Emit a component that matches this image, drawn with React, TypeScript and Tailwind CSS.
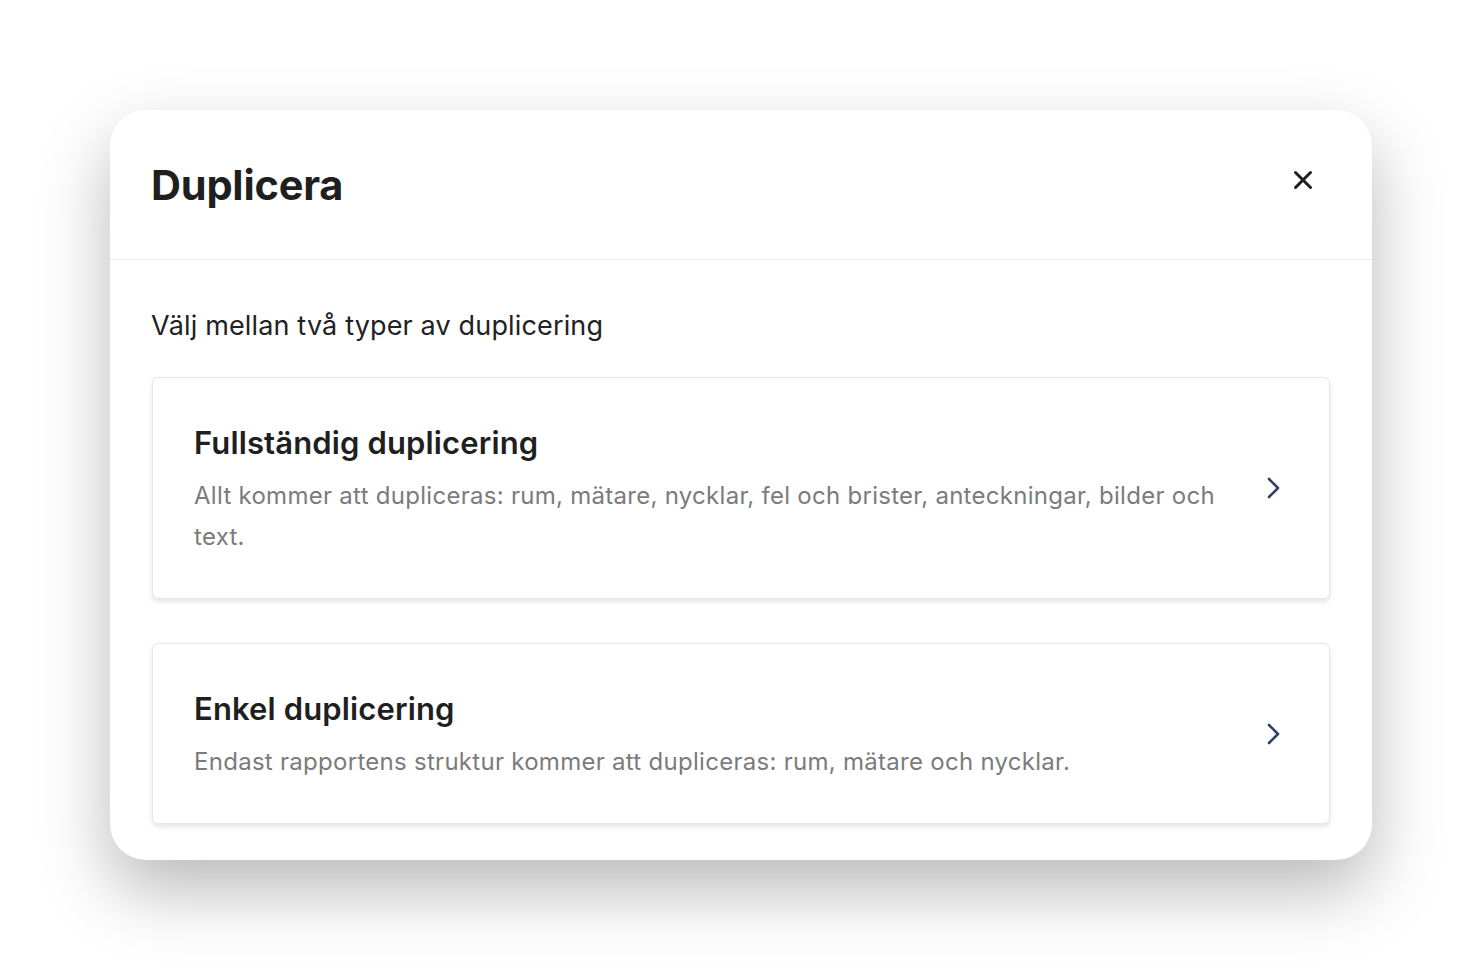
import { X } from 'lucide-react';

const options = [
  {
    title: 'Fullständig duplicering',
    text: 'Allt kommer att dupliceras: rum, mätare, nycklar, fel och brister, anteckningar, bilder och text.',
  },
  {
    title: 'Enkel duplicering',
    text: 'Endast rapportens struktur kommer att dupliceras: rum, mätare och nycklar.',
  },
];

function Chevron() {
  return (
    <svg width="14" height="22" viewBox="0 0 14 22" fill="none" className="shrink-0 -mt-[2px]">
      <polyline
        points="2,2 11,11 2,20"
        stroke="#2f3f64"
        strokeWidth="2.6"
        strokeLinecap="round"
        strokeLinejoin="round"
      />
    </svg>
  );
}

export default function App() {
  return (
    <div className="min-h-[970px] bg-white flex justify-center pt-[110px] font-['Inter','Liberation_Sans',sans-serif]">
      <div className="w-[1262px] h-[750px] bg-white rounded-[36px] shadow-[0_30px_70px_rgba(0,0,0,0.28)] overflow-hidden">
        {/* header */}
        <div className="h-[150px] border-b border-[#e8e8e8] flex items-center justify-between pl-[41px] pr-[54px]">
          <h1 className="text-[41.5px] font-bold text-[#1f1f1f] tracking-[-0.2px] mt-[2px]">Duplicera</h1>
          <button className="text-[#1f1f1f] -mt-[10px]">
            <X size={30} strokeWidth={2.4} />
          </button>
        </div>

        {/* body */}
        <div className="px-[41px] pt-[48px]">
          <p className="text-[27px] leading-[36px] tracking-[0.15px] text-[#222]">Välj mellan två typer av duplicering</p>

          <div className="mt-[33px] flex flex-col gap-[44px]">
            {options.map((o) => (
              <div
                key={o.title}
                className="ml-px w-[1178px] bg-white border border-[#e6e6e6] rounded-[6px] shadow-[0_3px_5px_rgba(0,0,0,0.1)] flex items-center pl-[41px] pr-[48px] pt-[43px] pb-[41px] gap-[40px] cursor-pointer"
              >
                <div className="flex-1">
                  <h2 className="text-[31px] leading-[44px] font-semibold tracking-[0.13px] text-[#1f1f1f]">{o.title}</h2>
                  <p className="mt-[10px] text-[24px] leading-[41px] tracking-[0.28px] text-[#7b7b7b]">{o.text}</p>
                </div>
                <Chevron />
              </div>
            ))}
          </div>
        </div>
      </div>
    </div>
  );
}
